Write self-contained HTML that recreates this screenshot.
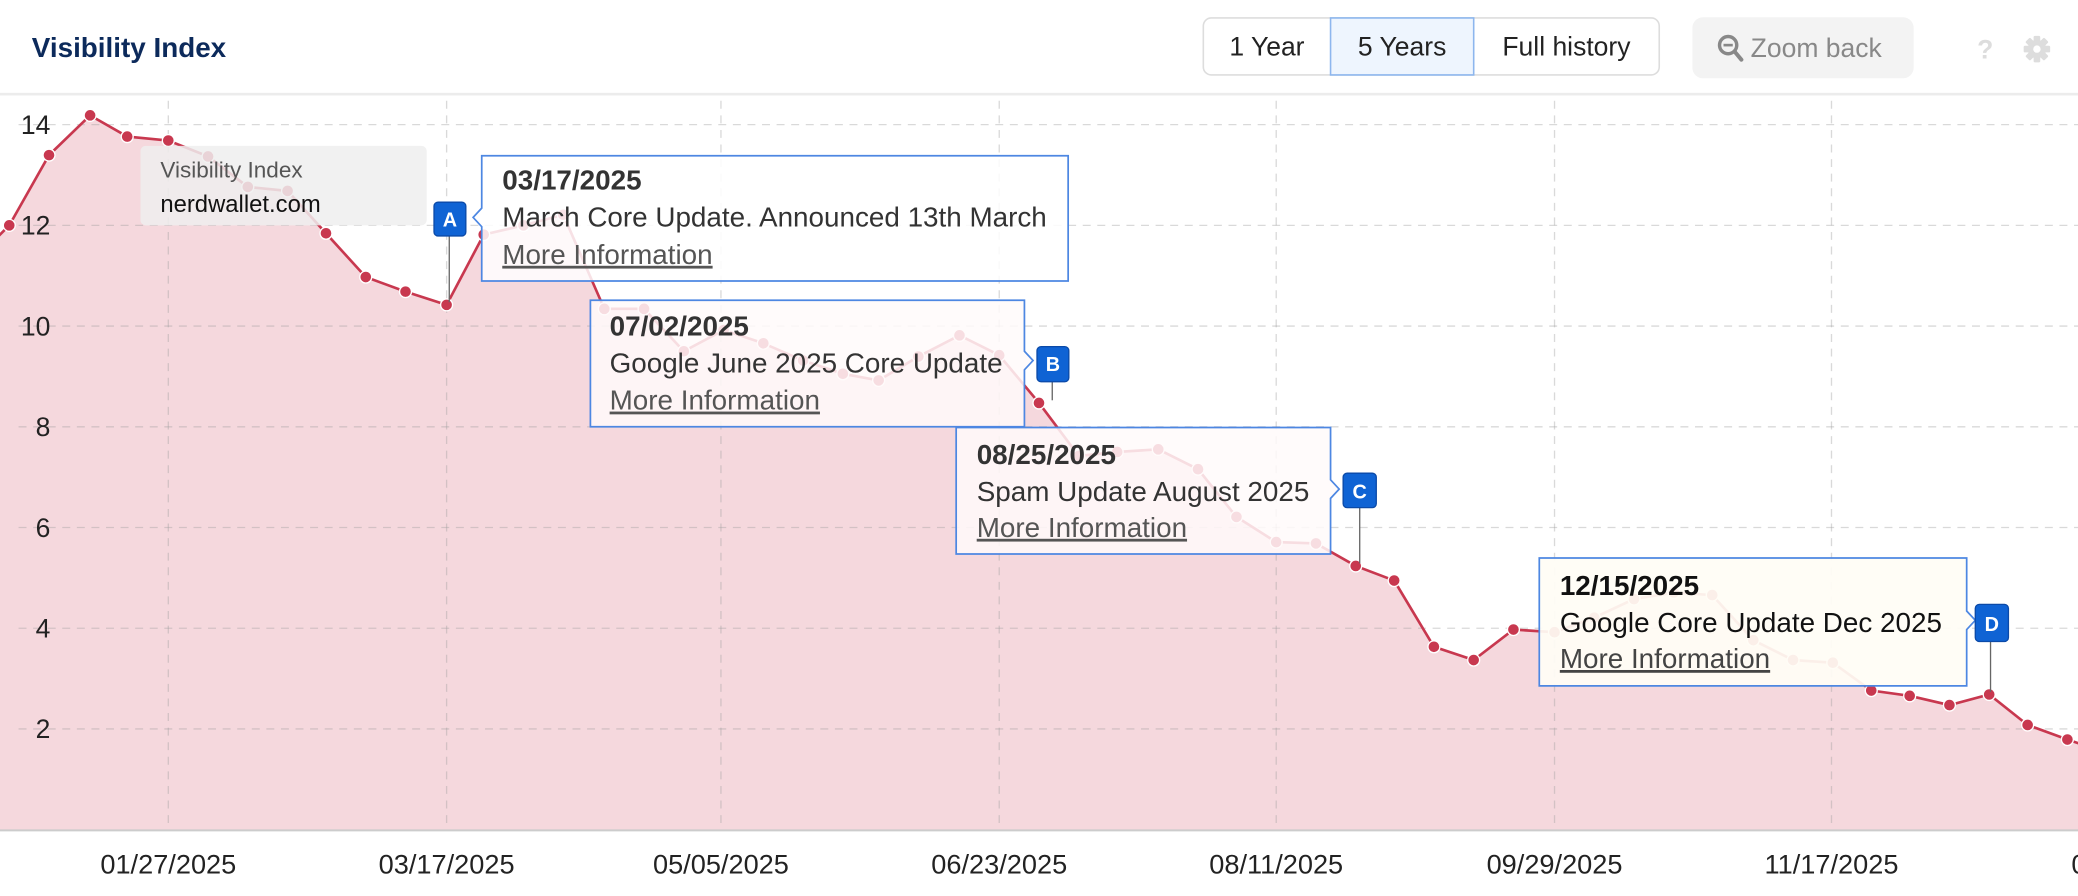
<!DOCTYPE html>
<html><head><meta charset="utf-8">
<style>
html,body{margin:0;padding:0;background:#fff;}
body{width:2078px;height:896px;overflow:hidden;}
svg{display:block;font-family:"Liberation Sans",Arial,sans-serif;}
</style></head>
<body>
<svg width="2078" height="896" viewBox="0 0 1568 676" xmlns="http://www.w3.org/2000/svg">
<rect x="0" y="0" width="1568" height="676" fill="#fff"/>
<!-- header -->
<text x="24" y="43" font-size="21" font-weight="bold" fill="#0c2a5b">Visibility Index</text>
<rect x="908" y="13.5" width="344" height="43" rx="6" fill="#fff" stroke="#ddd" stroke-width="1.2"/>
<rect x="1004" y="13.5" width="108" height="43" fill="#eef5fe" stroke="#8db6ee" stroke-width="1.2"/>
<text x="956" y="42" font-size="20" fill="#222" text-anchor="middle">1 Year</text>
<text x="1058" y="42" font-size="20" fill="#222" text-anchor="middle">5 Years</text>
<text x="1182" y="42" font-size="20" fill="#222" text-anchor="middle">Full history</text>
<rect x="1277" y="13" width="167" height="46" rx="8" fill="#f3f3f3"/>
<circle cx="1304" cy="34" r="6.5" fill="none" stroke="#888" stroke-width="2.6"/>
<line x1="1300.5" y1="34" x2="1307.5" y2="34" stroke="#888" stroke-width="2"/>
<line x1="1309" y1="39" x2="1314" y2="45" stroke="#888" stroke-width="3" stroke-linecap="round"/>
<text x="1321" y="43" font-size="20" fill="#888">Zoom back</text>
<text x="1498" y="44" font-size="20" font-weight="bold" fill="#ddd" text-anchor="middle">?</text>
<g transform="translate(1537,37)" fill="#ddd">
<circle r="7"/>
<rect x="-2.5" y="-10" width="5" height="20" rx="1"/>
<rect x="-2.5" y="-10" width="5" height="20" rx="1" transform="rotate(45)"/>
<rect x="-2.5" y="-10" width="5" height="20" rx="1" transform="rotate(90)"/>
<rect x="-2.5" y="-10" width="5" height="20" rx="1" transform="rotate(135)"/>
<circle r="2.8" fill="#fff"/>
</g>
<rect x="0" y="70" width="1568" height="2" fill="#ececec"/>

<!-- area -->
<polygon fill="#f5d8dd" points="-23,200 7,170 37,117 68,87 96,103 127,106 157,118 187,141 217,144 246,176 276,209 306,220 337,230 365,177 395,170 425,162 456,233 486,233 516,265 546,249 576,259 606,272 636,282 663,287 693,269 724,253 754,268 784,304 814,344 843,341 874,339 904,354 933,390 963,409 993,410 1023,427 1052,438 1082,488 1112,498 1142,475 1173,477 1203,466 1233,452 1263,447 1292,449 1323,483 1353,498 1383,500 1412,521 1441,525 1471,532 1501,524 1530,547 1560,558 1575,563 1575,626 -23,626"/>

<!-- grid -->
<g stroke="rgba(160,160,160,0.4)" stroke-width="1" stroke-dasharray="6,5">
<line x1="14" y1="94" x2="1568" y2="94"/>
<line x1="14" y1="170" x2="1568" y2="170"/>
<line x1="14" y1="246" x2="1568" y2="246"/>
<line x1="14" y1="322" x2="1568" y2="322"/>
<line x1="14" y1="398" x2="1568" y2="398"/>
<line x1="14" y1="474" x2="1568" y2="474"/>
<line x1="14" y1="550" x2="1568" y2="550"/>
<line x1="127" y1="76" x2="127" y2="626"/>
<line x1="337" y1="76" x2="337" y2="626"/>
<line x1="544" y1="76" x2="544" y2="626"/>
<line x1="754" y1="76" x2="754" y2="626"/>
<line x1="963" y1="76" x2="963" y2="626"/>
<line x1="1173" y1="76" x2="1173" y2="626"/>
<line x1="1382" y1="76" x2="1382" y2="626"/>
</g>
<line x1="0" y1="626.5" x2="1568" y2="626.5" stroke="#ccc" stroke-width="1.5"/>

<!-- axis labels -->
<g font-size="20" fill="#222" text-anchor="end">
<text x="38" y="101">14</text>
<text x="38" y="177">12</text>
<text x="38" y="253">10</text>
<text x="38" y="329">8</text>
<text x="38" y="405">6</text>
<text x="38" y="481">4</text>
<text x="38" y="557">2</text>
</g>
<g font-size="20.5" fill="#222" text-anchor="middle">
<text x="127" y="659">01/27/2025</text>
<text x="337" y="659">03/17/2025</text>
<text x="544" y="659">05/05/2025</text>
<text x="754" y="659">06/23/2025</text>
<text x="963" y="659">08/11/2025</text>
<text x="1173" y="659">09/29/2025</text>
<text x="1382" y="659">11/17/2025</text>
<text x="1563" y="659" text-anchor="start">0</text>
</g>

<!-- line -->
<polyline fill="none" stroke="#c8384f" stroke-width="2" points="-23,200 7,170 37,117 68,87 96,103 127,106 157,118 187,141 217,144 246,176 276,209 306,220 337,230 365,177 395,170 425,162 456,233 486,233 516,265 546,249 576,259 606,272 636,282 663,287 693,269 724,253 754,268 784,304 814,344 843,341 874,339 904,354 933,390 963,409 993,410 1023,427 1052,438 1082,488 1112,498 1142,475 1173,477 1203,466 1233,452 1263,447 1292,449 1323,483 1353,498 1383,500 1412,521 1441,525 1471,532 1501,524 1530,547 1560,558 1575,563"/>
<g fill="#c8384f" stroke="#fff" stroke-width="1">
<circle cx="7" cy="170" r="4.5"/><circle cx="37" cy="117" r="4.5"/><circle cx="68" cy="87" r="4.5"/><circle cx="96" cy="103" r="4.5"/><circle cx="127" cy="106" r="4.5"/><circle cx="157" cy="118" r="4.5"/><circle cx="187" cy="141" r="4.5"/><circle cx="217" cy="144" r="4.5"/><circle cx="246" cy="176" r="4.5"/><circle cx="276" cy="209" r="4.5"/><circle cx="306" cy="220" r="4.5"/><circle cx="337" cy="230" r="4.5"/><circle cx="365" cy="177" r="4.5"/><circle cx="395" cy="170" r="4.5"/><circle cx="425" cy="162" r="4.5"/><circle cx="456" cy="233" r="4.5"/><circle cx="486" cy="233" r="4.5"/><circle cx="516" cy="265" r="4.5"/><circle cx="546" cy="249" r="4.5"/><circle cx="576" cy="259" r="4.5"/><circle cx="606" cy="272" r="4.5"/><circle cx="636" cy="282" r="4.5"/><circle cx="663" cy="287" r="4.5"/><circle cx="693" cy="269" r="4.5"/><circle cx="724" cy="253" r="4.5"/><circle cx="754" cy="268" r="4.5"/><circle cx="784" cy="304" r="4.5"/><circle cx="814" cy="344" r="4.5"/><circle cx="843" cy="341" r="4.5"/><circle cx="874" cy="339" r="4.5"/><circle cx="904" cy="354" r="4.5"/><circle cx="933" cy="390" r="4.5"/><circle cx="963" cy="409" r="4.5"/><circle cx="993" cy="410" r="4.5"/><circle cx="1023" cy="427" r="4.5"/><circle cx="1052" cy="438" r="4.5"/><circle cx="1082" cy="488" r="4.5"/><circle cx="1112" cy="498" r="4.5"/><circle cx="1142" cy="475" r="4.5"/><circle cx="1173" cy="477" r="4.5"/><circle cx="1203" cy="466" r="4.5"/><circle cx="1233" cy="452" r="4.5"/><circle cx="1263" cy="447" r="4.5"/><circle cx="1292" cy="449" r="4.5"/><circle cx="1323" cy="483" r="4.5"/><circle cx="1353" cy="498" r="4.5"/><circle cx="1383" cy="500" r="4.5"/><circle cx="1412" cy="521" r="4.5"/><circle cx="1441" cy="525" r="4.5"/><circle cx="1471" cy="532" r="4.5"/><circle cx="1501" cy="524" r="4.5"/><circle cx="1530" cy="547" r="4.5"/><circle cx="1560" cy="558" r="4.5"/>
</g>

<!-- legend tooltip -->
<rect x="106" y="110" width="216" height="60" rx="4" fill="rgba(238,238,238,0.85)"/>
<text x="121" y="134" font-size="17" fill="#555">Visibility Index</text>
<text x="121" y="160" font-size="18" fill="#111">nerdwallet.com</text>

<!-- connectors -->
<g stroke="#666" stroke-width="1">
<line x1="339" y1="178" x2="339" y2="228"/>
<line x1="794" y1="288" x2="794" y2="302"/>
<line x1="1026" y1="383" x2="1026" y2="425"/>
<line x1="1502" y1="484" x2="1502" y2="522"/>
</g>

<!-- tooltip boxes -->
<g stroke="#4d87e2" stroke-width="1.3">
<path d="M363.5,117.5 H806 V212 H363.5 V171 L357,164 L363.5,157 Z" fill="rgba(255,255,255,0.85)"/>
<path d="M445.5,226.5 H773 V265 L779.5,272 L773,279 V322 H445.5 Z" fill="rgba(255,250,250,0.85)"/>
<path d="M721.5,322.5 H1004 V362 L1010.5,369 L1004,376 V418 H721.5 Z" fill="rgba(255,250,250,0.85)"/>
<path d="M1161.5,421 H1484 V461 L1490.5,468 L1484,475 V517.5 H1161.5 Z" fill="rgba(255,253,245,0.93)"/>
</g>
<g font-size="21" fill="#333">
<text x="379" y="143" font-weight="bold">03/17/2025</text>
<text x="379" y="171">March Core Update. Announced 13th March</text>
<text x="379" y="199" fill="#555" text-decoration="underline">More Information</text>
<text x="460" y="253" font-weight="bold">07/02/2025</text>
<text x="460" y="281">Google June 2025 Core Update</text>
<text x="460" y="309" fill="#555" text-decoration="underline">More Information</text>
<text x="737" y="350" font-weight="bold">08/25/2025</text>
<text x="737" y="378">Spam Update August 2025</text>
<text x="737" y="405" fill="#555" text-decoration="underline">More Information</text>
<text x="1177" y="449" font-weight="bold" fill="#111">12/15/2025</text>
<text x="1177" y="477" fill="#111">Google Core Update Dec 2025</text>
<text x="1177" y="504" fill="#444" text-decoration="underline">More Information</text>
</g>

<!-- flags -->
<g fill="#0f63d4" stroke="#0b4aa8" stroke-width="1">
<rect x="327.5" y="152.5" width="24" height="25.5" rx="3"/>
<rect x="782.5" y="261.5" width="24" height="26.5" rx="3"/>
<rect x="1013.5" y="357" width="25" height="26" rx="3"/>
<rect x="1490.5" y="456" width="25" height="28" rx="3"/>
</g>
<g font-size="15" font-weight="bold" fill="#fff" text-anchor="middle">
<text x="339.5" y="171">A</text>
<text x="794.5" y="280">B</text>
<text x="1026" y="376">C</text>
<text x="1503" y="476">D</text>
</g>
</svg>
</body></html>
